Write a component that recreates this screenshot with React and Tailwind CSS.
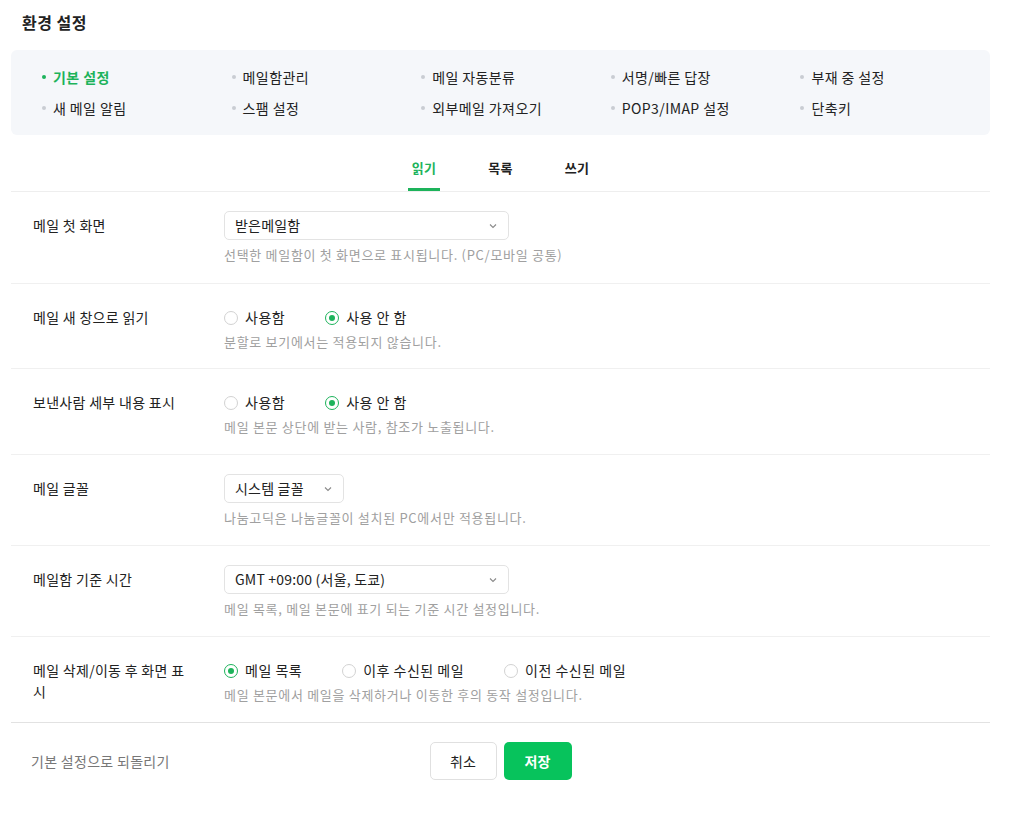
import { useState } from 'react'

const FONT = { fontFamily: '"Noto Sans CJK KR", "Noto Sans", sans-serif' }

const menus = [
  '기본 설정', '메일함관리', '메일 자동분류', '서명/빠른 답장', '부재 중 설정',
  '새 메일 알림', '스팸 설정', '외부메일 가져오기', 'POP3/IMAP 설정', '단축키',
]

function Chevron() {
  return (
    <svg width="10" height="10" viewBox="0 0 10 10" fill="none" className="shrink-0">
      <path d="M2 3.5 L5 6.5 L8 3.5" stroke="#8a8a8a" strokeWidth="1.1" />
    </svg>
  )
}

function Select({ value, width }) {
  return (
    <div className={`flex h-[29px] items-center justify-between rounded-[5px] border border-[#e3e3e3] bg-white pl-[10px] pr-[10px] text-[14px] tracking-[0.2px] text-[#222] ${width}`}>
      <span>{value}</span>
      <Chevron />
    </div>
  )
}

function Radio({ checked, label }) {
  return (
    <label className="flex items-center gap-[7px] text-[14px] tracking-[0.5px] text-[#222]">
      <span className={`flex h-[14px] w-[14px] items-center justify-center rounded-full border ${checked ? 'border-[#1db35b]' : 'border-[#d2d2d2]'}`}>
        {checked && <span className="h-[6px] w-[6px] rounded-full bg-[#1db35b]" />}
      </span>
      {label}
    </label>
  )
}

function Row({ label, help, children, radio, last, pb }) {
  const bottom = pb || (radio ? 'pb-[16px]' : 'pb-[17px]')
  return (
    <div className={`flex border-b ${last ? 'border-[#e2e2e2]' : 'border-[#f0f0f0]'} pl-[22px] pt-[19px] ${bottom}`}>
      <div className="min-h-[29px] w-[191px] shrink-0 pr-[28px] pt-[4px] text-[14px] leading-[21px] tracking-[0.3px] text-[#222]">
        {label}
      </div>
      <div className="flex flex-col">
        <div className="flex h-[29px] items-center gap-[40px]">{children}</div>
        <div className={`${radio ? 'mt-0' : 'mt-[5px]'} text-[13px] leading-[20px] tracking-[0.7px] text-[#a0a0a0]`}>{help}</div>
      </div>
    </div>
  )
}

export default function App() {
  const [tab] = useState('읽기')
  return (
    <div className="min-h-[820px] bg-white pl-[11px] pr-[27px]" style={FONT}>
      <div className="pl-[11px] pt-[11px] text-[16px] font-bold leading-[22px] tracking-[0.5px] text-[#222]">환경 설정</div>

      <div className="mt-[17px] grid h-[85px] grid-cols-5 content-center gap-y-[11px] rounded-[6px] bg-[#f5f7fa] pl-[31px]">
        {menus.map((m, i) => (
          <div key={m} className={`flex items-center gap-[7px] text-[14px] leading-[20px] tracking-[0.4px] ${i === 0 ? 'font-bold text-[#1db35b]' : 'text-[#222]'}`}>
            <span className={`h-[4px] w-[4px] shrink-0 rounded-full ${i === 0 ? 'bg-[#1db35b]' : 'bg-[#c9cdd2]'}`} />
            {m}
          </div>
        ))}
      </div>

      <div className="mt-[23px] flex justify-center gap-[44px] border-b border-[#eeeeee]">
        {['읽기', '목록', '쓰기'].map((t) => (
          <div key={t} className={`border-b-[3px] px-[4px] pb-[10px] text-[13px] font-bold leading-[20px] tracking-[0.3px] ${t === tab ? 'border-[#1db35b] text-[#1db35b]' : 'border-transparent text-[#222]'}`}>
            {t}
          </div>
        ))}
      </div>

      <Row pb="pb-[18px]" label="메일 첫 화면" help="선택한 메일함이 첫 화면으로 표시됩니다. (PC/모바일 공통)">
        <Select value="받은메일함" width="w-[285px]" />
      </Row>
      <Row radio label="메일 새 창으로 읽기" help="분할로 보기에서는 적용되지 않습니다.">
        <Radio label="사용함" />
        <Radio checked label="사용 안 함" />
      </Row>
      <Row radio pb="pb-[17px]" label="보낸사람 세부 내용 표시" help="메일 본문 상단에 받는 사람, 참조가 노출됩니다.">
        <Radio label="사용함" />
        <Radio checked label="사용 안 함" />
      </Row>
      <Row label="메일 글꼴" help="나눔고딕은 나눔글꼴이 설치된 PC에서만 적용됩니다.">
        <Select value="시스템 글꼴" width="w-[120px]" />
      </Row>
      <Row label="메일함 기준 시간" help="메일 목록, 메일 본문에 표기 되는 기준 시간 설정입니다.">
        <Select value="GMT +09:00 (서울, 도쿄)" width="w-[285px]" />
      </Row>
      <Row radio last pb="pb-[17px]" label="메일 삭제/이동 후 화면 표시" help="메일 본문에서 메일을 삭제하거나 이동한 후의 동작 설정입니다.">
        <Radio checked label="메일 목록" />
        <Radio label="이후 수신된 메일" />
        <Radio label="이전 수신된 메일" />
      </Row>

      <div className="grid grid-cols-[1fr_auto_1fr] items-center pt-[19px]">
        <div className="pl-[20px] text-[14px] tracking-[0.3px] text-[#777]">기본 설정으로 되돌리기</div>
        <div className="flex gap-[7px]">
          <button className="h-[38px] w-[67px] rounded-[5px] border border-[#e0e0e0] bg-white text-[14px] text-[#222]">취소</button>
          <button className="h-[38px] w-[68px] rounded-[5px] bg-[#07c35c] text-[14px] font-bold text-white">저장</button>
        </div>
        <div />
      </div>
    </div>
  )
}
